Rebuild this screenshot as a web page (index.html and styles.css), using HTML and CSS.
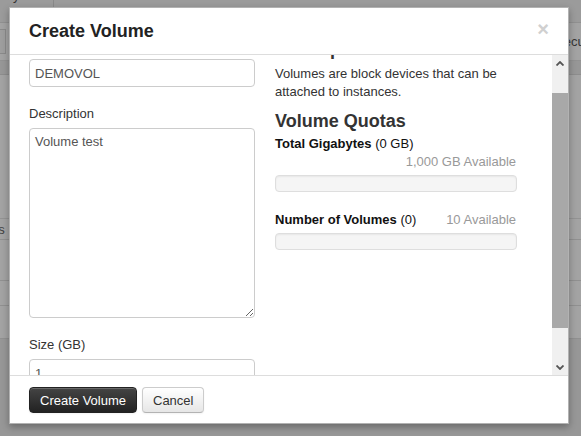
FILE: index.html
```html
<!DOCTYPE html>
<html lang="en">
<head>
<meta charset="utf-8">
<title>Volumes</title>
<link rel="stylesheet" href="styles.css">
</head>
<body>
<div class="page">
  <div class="page-tabs"><span class="tab">Summary</span></div>
  <div class="toolbar">
    <span class="tool-box"></span>
    <span class="tool-link">Security Groups</span>
  </div>
  <div class="table">
    <div class="thead"></div>
    <div class="tgap"></div>
    <div class="trow r1"><span class="cell">Volumes</span></div>
    <div class="trow r2"></div>
    <div class="trow r3"></div>
    <div class="trow r4"></div>
  </div>
  <div class="page-foot"></div>
</div>

<div class="backdrop"></div>

<div class="modal">
  <div class="modal-header">
    <h3 class="modal-title">Create Volume</h3>
    <span class="close">&times;</span>
  </div>
  <div class="modal-body">
    <div class="modal-scroll" id="volume-form-scroll">
      <div class="form-grid">
        <div class="fields">
          <label class="field-label">Volume Name</label>
          <input class="text-input" type="text" value="DEMOVOL">
          <label class="field-label">Description</label>
          <textarea class="text-area">Volume test</textarea>
          <label class="field-label">Size (GB)</label>
          <input class="text-input" type="text" value="1">
        </div>
        <div class="help">
          <h3 class="help-title help-title-first">Description</h3>
          <p class="help-text">Volumes are block devices that can be attached to instances.</p>
          <h3 class="help-title">Volume Quotas</h3>
          <div class="quota">
            <div class="quota-head">
              <span class="quota-name"><strong>Total Gigabytes</strong> (0 GB)</span>
              <span class="quota-avail">1,000 GB Available</span>
            </div>
            <div class="quota-bar"></div>
          </div>
          <div class="quota">
            <div class="quota-head">
              <span class="quota-name"><strong>Number of Volumes</strong> (0)</span>
              <span class="quota-avail">10 Available</span>
            </div>
            <div class="quota-bar"></div>
          </div>
        </div>
      </div>
    </div>
    <div class="scrollbar">
      <div class="sb-btn">
        <svg width="8" height="5" viewBox="0 0 8 5"><polyline points="0.5,4.5 4,1 7.5,4.5" fill="none" stroke="#555" stroke-width="1.8"/></svg>
      </div>
      <div class="sb-track"><div class="sb-thumb"></div></div>
      <div class="sb-btn">
        <svg width="8" height="5" viewBox="0 0 8 5"><polyline points="0.5,0.5 4,4 7.5,0.5" fill="none" stroke="#555" stroke-width="1.8"/></svg>
      </div>
    </div>
  </div>
  <div class="modal-footer">
    <button class="btn btn-primary" type="button">Create Volume</button>
    <button class="btn" type="button">Cancel</button>
  </div>
</div>
<script src="script.js"></script>
</body>
</html>
```

FILE: styles.css
```css
* { box-sizing: border-box; }

html, body {
  margin: 0;
  height: 100%;
  overflow: hidden;
}

body {
  font-family: "Liberation Sans", Arial, sans-serif;
  font-size: 13px;
  color: #333;
  background: #fff;
  position: relative;
}

/* page behind the dialog */
.page {
  height: 100%;
  display: flex;
  flex-direction: column;
}

.page-tabs {
  height: 23px;
  display: flex;
  align-items: flex-start;
  background: #f2f2f2;
  border-bottom: 1px solid #e2e2e2;
  overflow: hidden;
}

.tab {
  display: block;
  width: 54px;
  height: 34px;
  margin-top: -13px;
  border-right: 1px solid #d6d6d6;
  font-size: 13px;
  line-height: 18px;
  color: #555;
  text-indent: -36px;
  white-space: nowrap;
  overflow: hidden;
}

.toolbar {
  height: 38px;
  display: flex;
  align-items: center;
  background: #fff;
  border-bottom: 1px solid #e4e4e4;
  white-space: nowrap;
  overflow: hidden;
}

.tool-box {
  width: 6px;
  height: 25px;
  border: 1px solid #d8d8d8;
  border-left: none;
  background: #f7f7f7;
  flex: none;
}

.tool-link {
  margin-left: 549px;
  font-size: 13px;
  color: #555;
  flex: none;
}

.table {
  display: flex;
  flex-direction: column;
}

.thead {
  height: 14px;
  background: #ececec;
  border-bottom: 1px solid #ddd;
}

.tgap {
  height: 144px;
  border-bottom: 1px solid #e6e6e6;
}

.trow {
  border-bottom: 1px solid #e1e1e1;
  display: flex;
  align-items: center;
}

.r1 { height: 21px; }
.r2 { height: 41px; }
.r3 { height: 25px; }
.r4 { height: 33px; }

.cell {
  margin-left: -45px;
  color: #666;
}

.page-foot {
  flex: 1;
  background: #ededed;
}

.backdrop {
  position: absolute;
  inset: 0;
  background: rgba(0, 0, 0, 0.36);
}

/* dialog */
.modal {
  position: absolute;
  left: 9px;
  top: 7px;
  width: 560px;
  height: 417px;
  background: #fff;
  border: 1px solid rgba(0, 0, 0, 0.3);
  box-shadow: 0 3px 7px rgba(0, 0, 0, 0.3);
  display: flex;
  flex-direction: column;
}

.modal-header {
  height: 47px;
  flex: none;
  display: flex;
  align-items: center;
  justify-content: space-between;
  padding: 0 19px 0 19px;
  border-bottom: 1px solid #ddd;
}

.modal-title {
  margin: 0;
  font-size: 18px;
  font-weight: bold;
  color: #222;
  line-height: 27px;
}

.close {
  font-size: 20px;
  font-weight: bold;
  color: #d0d0d0;
  line-height: 20px;
  margin-top: -4px;
}

.modal-body {
  height: 320px;
  flex: none;
  display: flex;
}

.modal-scroll {
  flex: 1;
  overflow: hidden;
  padding: 15px 19px;
}

.form-grid {
  display: grid;
  grid-template-columns: 226px 242px;
  column-gap: 20px;
  align-items: start;
}

.fields {
  display: flex;
  flex-direction: column;
}

.field-label {
  display: block;
  line-height: 18px;
  margin-bottom: 5px;
  color: #333;
}

.text-input,
.text-area {
  width: 100%;
  font-family: "Liberation Sans", Arial, sans-serif;
  font-size: 13px;
  color: #555;
  border: 1px solid #ccc;
  border-radius: 4px;
  background: #fff;
  margin: 0 0 18px;
}

.text-input {
  height: 28px;
  padding: 0 5px;
}

.text-area {
  height: 190px;
  padding: 4px 5px;
  line-height: 18px;
  resize: both;
}

.help-title {
  margin: 3px 0 0;
  font-size: 18px;
  font-weight: bold;
  line-height: 27px;
  color: #333;
}

.help-title-first {
  margin: 0 0 2px;
  line-height: 27px;
}

.help-text {
  margin: 0 0 7px;
  line-height: 18px;
}

.quota {
  margin-bottom: 19px;
}

.quota-head {
  display: flex;
  flex-wrap: wrap;
  line-height: 18px;
}

.quota-name {
  color: #111;
}

.quota-avail {
  margin-left: auto;
  color: #999;
  padding-right: 1px;
}

.quota-bar {
  margin-top: 4px;
  height: 17px;
  border: 1px solid #dedede;
  border-radius: 4px;
  background: #f5f5f5;
  box-shadow: inset 0 1px 2px rgba(0, 0, 0, 0.06);
}

/* scrollbar of the dialog body */
.scrollbar {
  width: 16px;
  flex: none;
  display: flex;
  flex-direction: column;
  background: #f0f0f0;
}

.sb-btn {
  height: 16px;
  display: flex;
  align-items: center;
  justify-content: center;
}

.sb-track {
  flex: 1;
  padding-top: 22px;
}

.sb-thumb {
  height: 235px;
  background: #a8a8a8;
}

.modal-footer {
  flex: 1;
  border-top: 1px solid #ddd;
  padding: 11px 19px;
  display: flex;
  align-items: flex-start;
  gap: 5px;
}

.btn {
  height: 26px;
  padding: 0 10px;
  font-family: "Liberation Sans", Arial, sans-serif;
  font-size: 13px;
  color: #333;
  border: 1px solid #ccc;
  border-bottom-color: #b3b3b3;
  border-radius: 4px;
  background: linear-gradient(#ffffff, #e6e6e6);
  box-shadow: inset 0 1px 0 rgba(255, 255, 255, 0.2), 0 1px 2px rgba(0, 0, 0, 0.05);
}

.btn-primary {
  color: #fff;
  border-color: #222;
  background: linear-gradient(#444444, #222222);
}
```

FILE: script.js
```js
// The form starts scrolled a little, showing the volume name field.
document.getElementById('volume-form-scroll').scrollTop = 34;
```
